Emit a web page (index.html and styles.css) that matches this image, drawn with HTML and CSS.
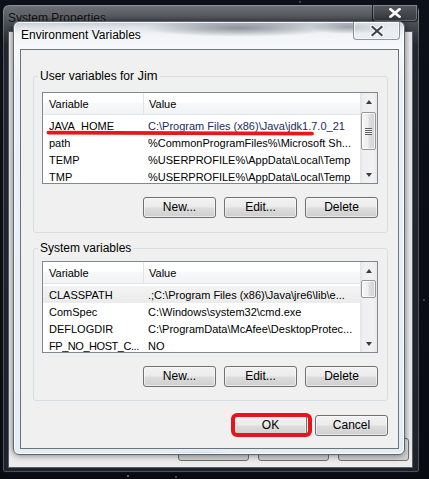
FILE: index.html
```html
<!DOCTYPE html>
<html lang="en">
<head>
<meta charset="utf-8">
<title>Environment Variables</title>
<link rel="stylesheet" href="styles.css">
</head>
<body>
<div class="desktop">
  <div class="win-outer">
    <div class="outer-title">
      <span class="outer-title-text">System Properties</span>
      <div class="outer-close">
        <svg width="12" height="10" viewBox="0 0 12 10"><path d="M1.5 1.2 L10.5 8.8 M10.5 1.2 L1.5 8.8" stroke="#ffffff" stroke-width="2.6" stroke-linecap="square"/></svg>
      </div>
    </div>
    <div class="outer-client">
      <div class="outer-buttons">
        <div class="obtn"></div>
        <div class="obtn"></div>
        <div class="obtn"></div>
      </div>
    </div>
  </div>

  <div class="dialog">
    <div class="dlg-title">
      <span class="dlg-title-text">Environment Variables</span>
      <div class="dlg-close">
        <svg width="14" height="12" viewBox="0 0 14 12"><path d="M2.5 2 L11.5 10 M11.5 2 L2.5 10" stroke="#ffffff" stroke-width="4.2" stroke-linecap="square"/><path d="M2.5 2 L11.5 10 M11.5 2 L2.5 10" stroke="#3e454d" stroke-width="2.2" stroke-linecap="square"/></svg>
      </div>
    </div>
    <div class="client">
      <fieldset class="group group-user">
        <legend>User variables for <span class="user">Jim</span></legend>
        <div class="listview">
          <div class="lv-main">
            <div class="lv-header"><div class="col-var">Variable</div><div class="col-val">Value</div></div>
            <div class="lv-rows">
              <div class="lv-row marked">
                <div class="col-var">JAVA_HOME</div><div class="col-val val-blue">C:\Program Files (x86)\Java\jdk1.7.0_21</div>
                <svg class="annot-line" width="270" height="7" viewBox="0 0 270 7"><path d="M2.5 2.6 Q135 2.6 266 3.6" stroke="#e8161d" stroke-width="3.8" fill="none" stroke-linecap="round"/></svg>
              </div>
              <div class="lv-row"><div class="col-var">path</div><div class="col-val">%CommonProgramFiles%\Microsoft Sh...</div></div>
              <div class="lv-row"><div class="col-var">TEMP</div><div class="col-val">%USERPROFILE%\AppData\Local\Temp</div></div>
              <div class="lv-row"><div class="col-var">TMP</div><div class="col-val">%USERPROFILE%\AppData\Local\Temp</div></div>
            </div>
          </div>
          <div class="scrollbar">
            <div class="sb-btn"><span class="arr-up"></span></div>
            <div class="sb-track"><div class="sb-thumb thumb-user"><span class="grip"></span></div></div>
            <div class="sb-btn"><span class="arr-down"></span></div>
          </div>
        </div>
        <div class="btn-row">
          <button class="btn">New...</button>
          <button class="btn">Edit...</button>
          <button class="btn">Delete</button>
        </div>
      </fieldset>

      <fieldset class="group group-sys">
        <legend>System variables</legend>
        <div class="listview">
          <div class="lv-main">
            <div class="lv-header"><div class="col-var">Variable</div><div class="col-val">Value</div></div>
            <div class="lv-rows">
              <div class="lv-row sel"><div class="col-var">CLASSPATH</div><div class="col-val">.;C:\Program Files (x86)\Java\jre6\lib\e...</div></div>
              <div class="lv-row"><div class="col-var">ComSpec</div><div class="col-val">C:\Windows\system32\cmd.exe</div></div>
              <div class="lv-row"><div class="col-var">DEFLOGDIR</div><div class="col-val">C:\ProgramData\McAfee\DesktopProtec...</div></div>
              <div class="lv-row"><div class="col-var col-tight">FP_NO_HOST_C...</div><div class="col-val">NO</div></div>
            </div>
          </div>
          <div class="scrollbar">
            <div class="sb-btn"><span class="arr-up"></span></div>
            <div class="sb-track"><div class="sb-thumb thumb-sys"></div></div>
            <div class="sb-btn"><span class="arr-down"></span></div>
          </div>
        </div>
        <div class="btn-row">
          <button class="btn">New...</button>
          <button class="btn">Edit...</button>
          <button class="btn">Delete</button>
        </div>
      </fieldset>

      <div class="dlg-buttons">
        <div class="ok-wrap">
          <button class="btn">OK</button>
          <div class="annot-box"></div>
        </div>
        <button class="btn">Cancel</button>
      </div>
    </div>
  </div>
</div>
</body>
</html>
```

FILE: styles.css
```css
* { box-sizing: border-box; }
html, body { margin: 0; padding: 0; }
body {
  width: 429px;
  height: 479px;
  overflow: hidden;
  background: #070a10;
  font-family: "Liberation Sans", Arial, sans-serif;
  color: #000;
}
.desktop {
  position: relative;
  width: 429px;
  height: 479px;
  background:
    radial-gradient(circle at 128px 476px, rgba(200,210,230,0.8) 0, rgba(200,210,230,0) 1.5px),
    radial-gradient(circle at 176px 477px, rgba(200,210,230,0.6) 0, rgba(200,210,230,0) 1.5px),
    radial-gradient(circle at 300px 2px, rgba(200,210,230,0.5) 0, rgba(200,210,230,0) 1.5px),
    radial-gradient(circle at 424px 300px, rgba(200,210,230,0.5) 0, rgba(200,210,230,0) 1.5px),
    linear-gradient(180deg, #0c1018 0%, #080b12 100%);
}

/* ---------- outer window (System Properties) ---------- */
.win-outer {
  position: absolute;
  left: 2px;
  top: 4px;
  width: 418px;
  height: 469px;
  border: 1px solid #0d1014;
  border-radius: 7px 7px 3px 3px;
  background: linear-gradient(180deg, #6e7278 0px, #5d6167 8px, #4b4f55 18px, #3a3e45 27px, #222732 40px, #1d222c 100%);
  box-shadow: inset 0 0 0 1px rgba(255,255,255,0.22);
  display: flex;
  flex-direction: column;
}
.outer-title {
  height: 26px;
  display: flex;
  justify-content: space-between;
  align-items: flex-start;
  padding-left: 5px;
}
.outer-title-text {
  margin-top: 6px;
  font-size: 12px;
  line-height: 14px;
  color: #111;
  text-shadow: 0 0 6px rgba(255,255,255,0.35);
}
.outer-close {
  width: 46px;
  height: 17px;
  margin-right: 1px;
  border: 1px solid rgba(0,0,0,0.6);
  border-top: none;
  border-radius: 0 0 4px 4px;
  background: linear-gradient(180deg, #585c62 0%, #45494f 50%, #383c42 100%);
  box-shadow: inset 0 0 0 1px rgba(255,255,255,0.25);
  display: flex;
  align-items: center;
  justify-content: center;
}
.outer-client {
  flex: 1;
  margin: 0 6px 4px 5px;
  background: #ececec;
  border: 1px solid #585e66;
  display: flex;
  flex-direction: column;
  justify-content: flex-end;
}
.outer-buttons {
  display: flex;
  justify-content: flex-end;
  gap: 9px;
  padding: 0 3px 6px 0;
}
.obtn {
  width: 71px;
  height: 23px;
  border: 1px solid #707070;
  border-radius: 3px;
  background: linear-gradient(180deg, #f2f2f2 0%, #ebebeb 50%, #dddddd 51%, #cfcfcf 100%);
}

/* ---------- dialog (Environment Variables) ---------- */
.dialog {
  position: absolute;
  left: 13px;
  top: 21px;
  width: 392px;
  height: 434px;
  border: 1px solid #5c6570;
  border-radius: 6px;
  background:
    radial-gradient(ellipse 95px 9px at 225px 6px, rgba(70,78,88,0.55), rgba(70,78,88,0)),
    radial-gradient(ellipse 40px 7px at 335px 5px, rgba(70,78,88,0.45), rgba(70,78,88,0)),
    radial-gradient(ellipse 40px 4px at 185px 433px, rgba(120,180,225,0.6), rgba(120,180,225,0)),
    linear-gradient(180deg, #c3cad0 0px, #dde2e7 5px, #f2f5f8 13px, #f7f9fb 27px, #eaf1f6 60px, #e4edf4 100%);
  box-shadow: 0 0 7px rgba(0,0,0,0.55), inset 0 0 0 1px rgba(255,255,255,0.8);
  display: flex;
  flex-direction: column;
}
.dlg-title {
  height: 27px;
  display: flex;
  justify-content: space-between;
  align-items: flex-start;
  padding-left: 7px;
}
.dlg-title-text {
  margin-top: 6px;
  font-size: 12px;
  line-height: 14px;
  color: #000;
  text-shadow: 0 0 7px #fff, 0 0 4px #fff;
}
.dlg-close {
  width: 47px;
  height: 18px;
  margin-right: 4px;
  border: 1px solid rgba(75,85,95,0.6);
  border-top: none;
  border-radius: 0 0 4px 4px;
  background: linear-gradient(180deg, rgba(255,255,255,0.55) 0%, rgba(235,240,245,0.4) 50%, rgba(215,225,232,0.5) 100%);
  box-shadow: inset 0 0 0 1px rgba(255,255,255,0.65);
  display: flex;
  align-items: center;
  justify-content: center;
}
.client {
  margin: 0 5px 0 6px;
  height: 400px;
  background: #f0f0f0;
  border: 1px solid #6d737a;
  display: flex;
  flex-direction: column;
}

/* ---------- group boxes ---------- */
.group {
  margin: 0 10px 0 12px;
  padding: 0 9px 13px 8px;
  border: 1px solid #d5dfe5;
  border-radius: 3px;
  min-width: 0;
}
.group-user { margin-top: 19px; padding-bottom: 14px; }
.group-sys { margin-top: 8px; }
.group legend {
  padding: 0 2px;
  margin-left: -4px;
  font-size: 12px;
  line-height: 14px;
  color: #000;
}
.user { font-size: 13px; }

/* ---------- list views ---------- */
.listview {
  margin-top: 9px;
  height: 92px;
  border: 1px solid #828790;
  background: #fff;
  display: flex;
  overflow: hidden;
}
.group-sys .listview { margin-top: 6px; }
.lv-main {
  flex: 1;
  min-width: 0;
  overflow: hidden;
}
.lv-header {
  height: 22px;
  display: flex;
  font-size: 11px;
  border-bottom: 1px solid #e2e4e7;
  background: linear-gradient(180deg, #ffffff 0%, #ffffff 45%, #f7f8f9 46%, #f2f3f5 100%);
}
.lv-header .col-var {
  width: 101px;
  border-right: 1px solid #e2e3e5;
  display: flex;
  align-items: center;
  padding-top: 1px;
}
.lv-header .col-val {
  display: flex;
  align-items: center;
  padding-top: 1px;
}
.lv-rows { padding-top: 2px; }
.lv-row {
  position: relative;
  height: 17px;
  display: flex;
  align-items: center;
  font-size: 11px;
}
.lv-row.sel {
  background: linear-gradient(180deg, #f3f3f3 0%, #ebebeb 100%);
}
.col-var {
  width: 100px;
  flex-shrink: 0;
  padding-left: 6px;
  white-space: nowrap;
  overflow: hidden;
}
.col-tight { letter-spacing: -0.45px; }
.col-val {
  flex: 1;
  min-width: 0;
  padding-left: 5px;
  white-space: nowrap;
  overflow: hidden;
}
.val-blue { color: #1a2c5e; }
.annot-line {
  position: absolute;
  left: 3px;
  top: 13px;
}

/* ---------- scrollbars ---------- */
.scrollbar {
  width: 17px;
  flex-shrink: 0;
  display: flex;
  flex-direction: column;
  background: linear-gradient(90deg, #e2e3e6 0px, #efeff1 3px, #f1f1f3 13px, #e9e9ec 17px);
}
.sb-btn {
  height: 17px;
  flex-shrink: 0;
  display: flex;
  align-items: center;
  justify-content: center;
}
.arr-up {
  width: 0;
  height: 0;
  border-left: 3.5px solid transparent;
  border-right: 3.5px solid transparent;
  border-bottom: 4px solid #3c3c3c;
}
.arr-down {
  width: 0;
  height: 0;
  border-left: 3.5px solid transparent;
  border-right: 3.5px solid transparent;
  border-top: 4px solid #3c3c3c;
}
.sb-track {
  flex: 1;
  display: flex;
  flex-direction: column;
}
.sb-thumb {
  margin: 2px 1px 0 1px;
  border: 1px solid #979797;
  border-radius: 2px;
  background: linear-gradient(90deg, #f6f6f6 0%, #ededed 45%, #dedede 55%, #d3d3d3 100%);
  box-shadow: inset 0 0 0 1px rgba(255,255,255,0.7);
  display: flex;
  align-items: center;
  justify-content: center;
}
.thumb-user { height: 38px; }
.thumb-sys { height: 18px; margin-top: 1px; }
.grip {
  width: 7px;
  height: 7px;
  background: repeating-linear-gradient(180deg, #5e5e5e 0px, #5e5e5e 1px, #f2f2f2 1px, #f2f2f2 2px);
}

/* ---------- buttons ---------- */
.btn-row {
  display: flex;
  justify-content: flex-end;
  gap: 8px;
  margin-top: 13px;
}
.btn {
  width: 73px;
  height: 21px;
  margin: 0;
  padding: 0;
  border: 1px solid #707070;
  border-radius: 3px;
  background: linear-gradient(180deg, #f2f2f2 0%, #ebebeb 48%, #dddddd 52%, #cfcfcf 100%);
  box-shadow: inset 0 0 0 1px rgba(255,255,255,0.55);
  font-family: "Liberation Sans", Arial, sans-serif;
  font-size: 12px;
  line-height: 19px;
  color: #000;
  text-align: center;
  -webkit-appearance: none;
  appearance: none;
}
.dlg-buttons {
  display: flex;
  justify-content: flex-end;
  gap: 8px;
  margin: 14px 10px 0 0;
}
.ok-wrap {
  position: relative;
  display: flex;
}
.annot-box {
  position: absolute;
  left: -3px;
  top: -2px;
  right: -5px;
  bottom: -1px;
  border: 4px solid #e8131b;
  border-radius: 6px;
}
```
